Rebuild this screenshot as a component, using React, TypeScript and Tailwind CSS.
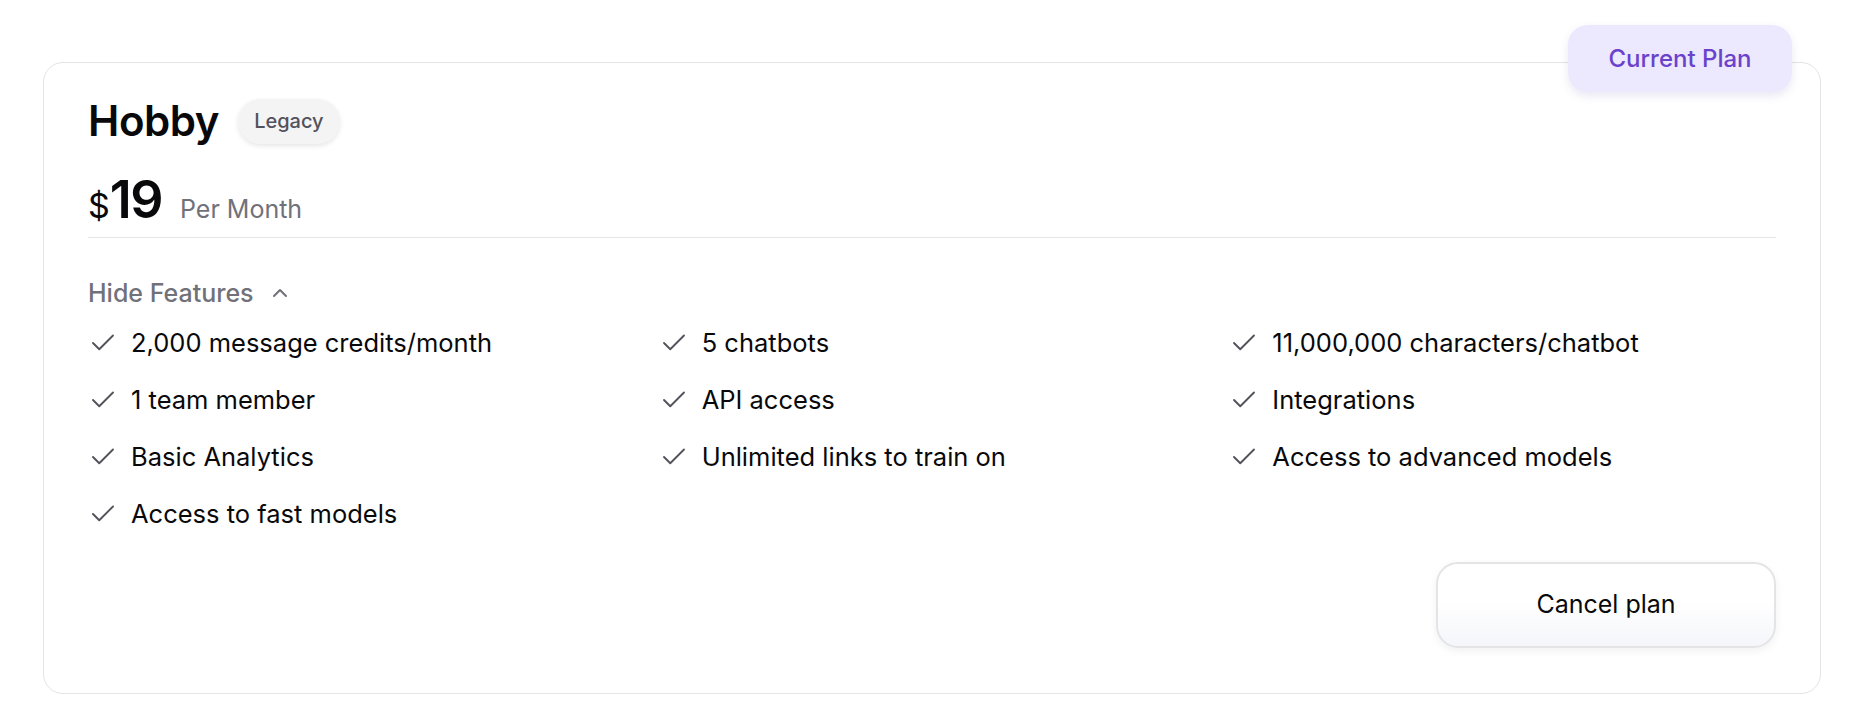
import { Check, ChevronUp } from "lucide-react";

const features = [
  "2,000 message credits/month",
  "5 chatbots",
  "11,000,000 characters/chatbot",
  "1 team member",
  "API access",
  "Integrations",
  "Basic Analytics",
  "Unlimited links to train on",
  "Access to advanced models",
  "Access to fast models",
];

export default function App() {
  return (
    <div className="min-h-[722px] bg-white pl-[43px] pr-[49px] pt-[62px] font-['Inter',sans-serif] text-[#09090b]">
      <div className="relative rounded-[20px] border border-[#e4e4e7] bg-white px-[44px] pb-[45px] pt-[33px]">
        {/* current plan tag */}
        <div className="absolute -top-[38px] right-[28px] flex h-[67px] w-[224px] items-center justify-center rounded-[20px] bg-[#ece8fd] text-[24px] font-medium text-[#6a42cc] shadow-[0_4px_10px_rgba(80,60,160,0.12)]">
          Current Plan
        </div>

        <div className="flex h-[50px] items-center gap-[19px]">
          <h2 className="text-[42px] font-semibold leading-[50px] tracking-[-0.01em]">Hobby</h2>
          <span className="flex h-[45px] items-center rounded-full bg-[#f4f4f5] px-[16px] text-[20px] font-medium text-[#52525b] shadow-[0_2px_5px_rgba(0,0,0,0.1)]">
            Legacy
          </span>
        </div>

        <div className="mt-[28px] flex items-baseline">
          <span className="text-[34px] leading-none">$</span>
          <span className="text-[52px] font-semibold leading-[52px] tracking-[-0.03em]">19</span>
          <span className="ml-[18px] text-[25px] leading-none text-[#71717a]">Per Month</span>
        </div>

        <div className="mt-[11px] h-px bg-[#e4e4e7]" />

        <button className="mt-[39px] flex h-8 items-center gap-[14px] text-[25px] font-medium leading-8 text-[#71717a]">
          Hide Features
          <ChevronUp className="h-[24px] w-[24px]" strokeWidth={2} />
        </button>

        <ul className="mt-[18px] grid grid-cols-3 gap-x-6 gap-y-[25px]">
          {features.map((f) => (
            <li key={f} className="flex h-8 items-center gap-[13px] text-[25.5px] leading-8">
              <Check className="h-[30px] w-[30px] shrink-0 text-[#52525b]" strokeWidth={1.5} />
              <span>{f}</span>
            </li>
          ))}
        </ul>

        <div className="mt-[32px] flex justify-end">
          <button className="h-[86px] w-[340px] rounded-[22px] border-2 border-[#e4e4e7] bg-[linear-gradient(to_bottom,#ffffff_45%,#f5f6fa)] text-[25px] font-normal shadow-[0_3px_8px_rgba(0,0,0,0.06)]">
            Cancel plan
          </button>
        </div>
      </div>
    </div>
  );
}
